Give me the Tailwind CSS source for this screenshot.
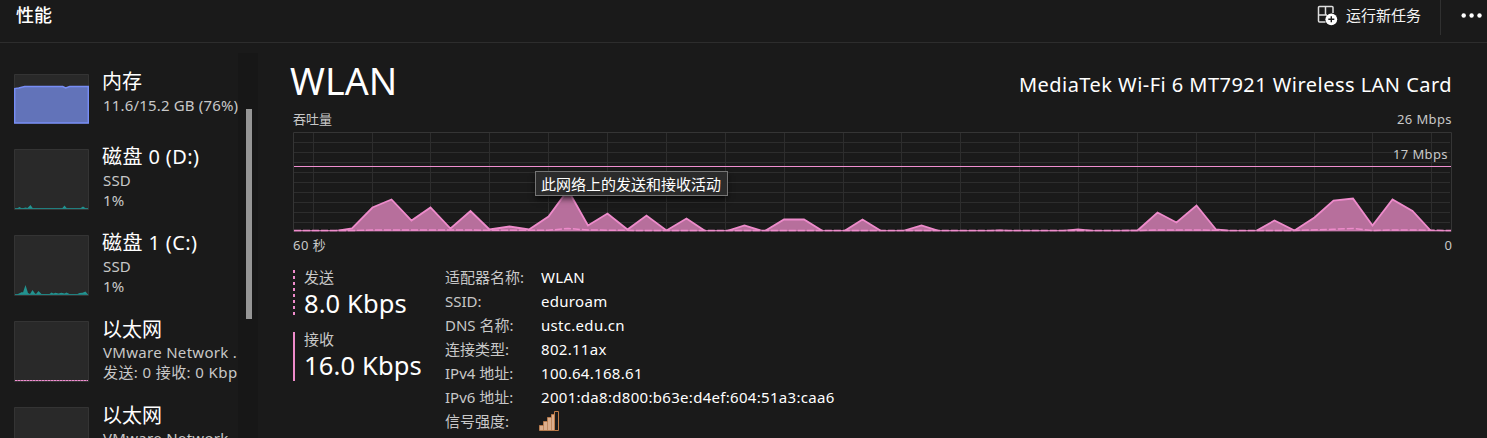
<!DOCTYPE html>
<html lang="zh-CN">
<head>
<meta charset="utf-8">
<title>性能</title>
<script src="https://cdn.jsdelivr.net/npm/@tailwindcss/browser@4"></script>
</head>
<body class="w-[1487px] h-[438px] overflow-hidden bg-[#1a1a1a] text-white font-['Noto_Sans','Noto_Sans_CJK_SC',sans-serif] whitespace-nowrap">
<div class="flex h-full flex-col">
  <header class="flex h-[43px] shrink-0 justify-between border-b border-[#2d2d2d]">
    <h1 class="pt-[3px] pl-[16px] text-[18px] leading-[24px] font-medium">性能</h1>
    <div class="flex">
      <svg class="-ml-px mt-[5px] mr-[8px]" width="21" height="21" viewBox="0 0 21 21" fill="none">
        <path d="M8.500 17H2.500a1 1 0 0 1-1-1V2.500a1 1 0 0 1 1-1H15a1 1 0 0 1 1 1V8M8.500 1.500v8.500M1.500 10H10" stroke="#ddd" stroke-width="1.500"/>
        <circle cx="14.300" cy="14.300" r="5.900" fill="#fff"/>
        <path d="M14.300 11.300v6M11.300 14.300h6" stroke="#1a1a1a" stroke-width="1.400"/>
      </svg>
      <div class="mt-[5px] w-[94px] text-[15px] leading-[21px] text-[#f4f4f4]">运行新任务</div>
      <div class="h-[35px] w-px bg-[#303030]"></div>
      <svg class="mt-[12px] ml-[20px]" width="26" height="7" viewBox="0 0 26 7" fill="#fff"><circle cx="2.700" cy="3.500" r="2.200"/><circle cx="10.600" cy="3.500" r="2.200"/><circle cx="18.500" cy="3.500" r="2.200"/></svg>
    </div>
  </header>
  <div class="flex min-h-0 flex-1">
    <aside class="w-[238px] shrink-0 overflow-hidden pl-[14px] pt-[25px]">
      <div class="flex h-[79px] gap-[14px]">
        <svg class="mt-[6px] shrink-0" width="75" height="50" viewBox="0 0 75 50"><path d="M.5.5h74v49H.5z" fill="#292929" stroke="#343434"/><path d="M.7 49V14.500l4-.5 6-1.500h38l3 1.500 4-1.500h18.600V49z" fill="#6273b9" stroke="#778df5" stroke-width="1.400"/></svg>
        <div class="min-w-0"><div class="-ml-px text-[20px] leading-[28px]">内存</div><div class="-mt-px text-[15px] leading-[20px] tracking-[0.17px] text-[#c8c8c8]">11.6/15.2 GB (76%)</div></div>
      </div>
      <div class="flex h-[86px] gap-[14px]">
        <svg class="mt-[2px] shrink-0" width="75" height="61" viewBox="0 0 75 61"><path d="M.5.5h74v60H.5z" fill="#292929" stroke="#343434"/><path d="M1 59.500h73" stroke="#217f7f"/><path d="M3 59.500l2.500-1.500 2.500 1.500 3.500-1 2 .5 3-3 2.500 3.500zM48 59.500l2.500-3 2.500 3zM66 59.500l3-2 3 2z" fill="#23928f"/></svg>
        <div class="min-w-0"><div class="-mt-[4px] -ml-px text-[20px] leading-[28px] tracking-[0.4px]">磁盘 0 (D:)</div><div class="-mt-px text-[15px] leading-[20px] tracking-[0.2px] text-[#c8c8c8]">SSD</div><div class="text-[15px] leading-[20px] tracking-[0.1px] text-[#c8c8c8]">1%</div></div>
      </div>
      <div class="flex h-[86px] gap-[14px]">
        <svg class="mt-[2px] shrink-0" width="75" height="61" viewBox="0 0 75 61"><path d="M.5.5h74v60H.5z" fill="#292929" stroke="#343434"/><path d="M1 59.500h73" stroke="#217f7f"/><path d="M3 59.500l5-2.500 1 .5 2.500-7.500 2.500 8 2 1 2.500-4 2.500 3.500 1 .5 2.500-3 3 3h8l2-1.500 2 1 2-.7 3 .7 3-.7 3 .7 2-1 3 1.500h8l2-1 3-.3 3-1.200 2 2.500z" fill="#23928f"/></svg>
        <div class="min-w-0"><div class="-mt-[4px] -ml-px text-[20px] leading-[28px] tracking-[0.4px]">磁盘 1 (C:)</div><div class="-mt-px text-[15px] leading-[20px] tracking-[0.2px] text-[#c8c8c8]">SSD</div><div class="text-[15px] leading-[20px] tracking-[0.1px] text-[#c8c8c8]">1%</div></div>
      </div>
      <div class="flex h-[86px] gap-[14px]">
        <svg class="mt-[2px] shrink-0" width="75" height="61" viewBox="0 0 75 61"><path d="M.5.5h74v60H.5z" fill="#292929" stroke="#343434"/><path d="M1 59.500h73" stroke="#a8628f"/><path d="M1 59.500h73" stroke="#ee8fd0" stroke-dasharray="2 1"/></svg>
        <div class="min-w-0"><div class="-mt-[3px] -ml-px text-[20px] leading-[28px]">以太网</div><div class="-mt-[2px] text-[15px] leading-[20px] tracking-[0.3px] text-[#c8c8c8]">VMware Network .</div><div class="text-[15px] leading-[20px] tracking-[0.4px] text-[#c8c8c8]">发送: 0 接收: 0 Kbp</div></div>
      </div>
      <div class="flex h-[86px] gap-[14px]">
        <svg class="mt-[2px] shrink-0" width="75" height="61" viewBox="0 0 75 61"><path d="M.5.5h74v60H.5z" fill="#292929" stroke="#343434"/></svg>
        <div class="min-w-0"><div class="-mt-[3px] -ml-px text-[20px] leading-[28px]">以太网</div><div class="-mt-[2px] text-[15px] leading-[20px] tracking-[0.3px] text-[#c8c8c8]">VMware Network</div></div>
      </div>
    </aside>
    <div class="mt-[10px] w-[20px] shrink-0 bg-[#171717] pt-[56px] pl-[8px]"><div class="h-[210px] w-[6px] bg-[#969696]"></div></div>
    <main class="w-[1194px] shrink-0 pl-[35px]">
      <div class="flex h-[66px] justify-between">
        <div class="-ml-[3px] pt-[12px] text-[37.5px] leading-[52px] tracking-[0.1px]">WLAN</div>
        <div class="pt-[28px] text-[20px] leading-[28px] tracking-[0.46px]">MediaTek Wi-Fi 6 MT7921 Wireless LAN Card</div>
      </div>
      <div class="flex h-[23px] justify-between text-[13px] leading-[20px] text-[#c8c8c8]"><span>吞吐量</span><span class="tracking-[0.4px]">26 Mbps</span></div>
      <div class="relative h-[100px]">
        <svg width="1159" height="100" viewBox="293 132 1159 100">
          <path d="M293 142.500h1157M293 152.500h1157M293 162.500h1157M293 172.500h1157M293 182.500h1157M293 192.500h1157M293 202.500h1157M293 212.500h1157M293 222.500h1157M313.500 132v99M372.500 132v99M430.500 132v99M489.500 132v99M548.500 132v99M607.500 132v99M666.500 132v99M725.500 132v99M784.500 132v99M843.500 132v99M901.500 132v99M960.500 132v99M1019.500 132v99M1078.500 132v99M1137.500 132v99M1196.500 132v99M1255.500 132v99M1314.500 132v99M1372.500 132v99M1431.500 132v99" stroke="#2d2d2d"/>
          <path d="M293.500 132.500h1158v99h-1158z" fill="none" stroke="#353535"/>
          <path d="M294 231.500L333 231.500L352 228.500L372.500 207.500L391.500 199.500L411.500 220.500L430.500 207.500L450.500 228.500L470.500 211L489.500 229.500L509.500 226.500L529 229.500L548.500 216.500L568 190L588 225.500L607.500 213.500L627.500 229.500L646.500 215.500L666.500 230.500L686.500 218.500L706 231.500L725 231.500L744.500 225.500L764 231.500L784 219.500L804 219.500L823.500 231.500L843.500 231.500L862.500 219.500L882 231.500L901 231.500L921.500 225.500L941 231.500L980 231.500L1000 230.500L1020 231.500L1058 231.500L1078 229.500L1098 231.500L1137.500 230.500L1157.500 212.500L1176.500 222.500L1196.500 205.500L1216 229.500L1235 231.500L1255 231.500L1274.500 220.500L1294.500 230.500L1314.500 217.500L1333.500 200.500L1353 198.500L1372.500 225.500L1392.500 199.500L1412.500 211L1431.500 231.500L1451 231.500" fill="#b76f9c"/>
          <path d="M294 231.500L333 231.500L352 228.500L372.500 207.500L391.500 199.500L411.500 220.500L430.500 207.500L450.500 228.500L470.500 211L489.500 229.500L509.500 226.500L529 229.500L548.500 216.500L568 190L588 225.500L607.500 213.500L627.500 229.500L646.500 215.500L666.500 230.500L686.500 218.500L706 231.500L725 231.500L744.500 225.500L764 231.500L784 219.500L804 219.500L823.500 231.500L843.500 231.500L862.500 219.500L882 231.500L901 231.500L921.500 225.500L941 231.500L980 231.500L1000 230.500L1020 231.500L1058 231.500L1078 229.500L1098 231.500L1137.500 230.500L1157.500 212.500L1176.500 222.500L1196.500 205.500L1216 229.500L1235 231.500L1255 231.500L1274.500 220.500L1294.500 230.500L1314.500 217.500L1333.500 200.500L1353 198.500L1372.500 225.500L1392.500 199.500L1412.500 211L1431.500 231.500L1451 231.500" fill="none" stroke="#ee8bcb" stroke-width="1.800"/>
          <path d="M294 230.500h1157" stroke="#c97aae"/>
          <path d="M294 231.500h1157" stroke="#5a3d50"/>
          <path d="M294 230.500H352L372 230H430L548 230.300L568 228.500L588 230L646 230.500H1137L1157 230H1196L1235 230.500H1294L1333 229.300L1353 228.500L1372 230.500L1392 230H1412L1451 230.500" fill="none" stroke="#ee8bcb" stroke-width="1.500" stroke-dasharray="7 2"/>
          <path d="M294 166.500h1157" stroke="#f08fd0"/>
        </svg>
        <div class="absolute top-[12px] right-[4px] text-[13px] leading-[20px] tracking-[0.4px] text-[#c8c8c8]">17 Mbps</div>
        <div class="absolute top-[39px] left-[242px] flex h-[25px] w-[193px] items-center border border-[#767676] bg-[#2b2b2b] pl-[5px] text-[15px] leading-[20px] shadow-md shadow-black/60">此网络上的发送和接收活动</div>
      </div>
      <div class="flex h-[35px] justify-between pt-[3px] text-[13px] leading-[20px] text-[#c8c8c8]"><span class="tracking-[0.5px]">60 秒</span><span>0</span></div>
      <div class="flex">
        <div class="w-[152px]">
          <div class="flex h-[62px] gap-[9px]">
            <svg class="mt-[3px]" width="2" height="45"><path d="M1 0v45" stroke="#ee8bcb" stroke-width="2" stroke-dasharray="3 3"/></svg>
            <div><div class="text-[15px] leading-[20px] text-[#c8c8c8]">发送</div><div class="text-[25.500px] leading-[32px] tracking-[0.1px]">8.0 Kbps</div></div>
          </div>
          <div class="flex h-[62px] gap-[9px]">
            <div class="mt-[3px] h-[49px] w-[2px] bg-[#ee8bcb]"></div>
            <div><div class="text-[15px] leading-[20px] text-[#c8c8c8]">接收</div><div class="text-[25.500px] leading-[32px] tracking-[0.15px]">16.0 Kbps</div></div>
          </div>
        </div>
        <div class="grid grid-cols-[96px_1fr] auto-rows-[24px] text-[15px] leading-[20px] [&>*:nth-child(odd)]:text-[#c8c8c8] [&>*:nth-child(even)]:tracking-[0.3px]">
          <div>适配器名称:</div><div class="pl-0">WLAN</div>
          <div>SSID:</div><div>eduroam</div>
          <div>DNS 名称:</div><div>ustc.edu.cn</div>
          <div>连接类型:</div><div>802.11ax</div>
          <div>IPv4 地址:</div><div>100.64.168.61</div>
          <div>IPv6 地址:</div><div>2001:da8:d800:b63e:d4ef:604:51a3:caa6</div>
          <div>信号强度:</div>
          <svg class="-ml-[2px]" width="20" height="20" viewBox="0 0 20 20"><path d="M.5 19.500v-5h4v-4h4v-4h4v-3h3v16z" fill="#dcae8c" stroke="#b5794c"/><path d="M4.500 14v5M8.500 10v9M12.500 6v13" stroke="#b5794c" stroke-opacity=".7"/><path d="M15.500.5h4v19h-4z" fill="#1a1a1a" stroke="#c07b46"/></svg>
        </div>
      </div>
    </main>
  </div>
</div>
</body>
</html>
